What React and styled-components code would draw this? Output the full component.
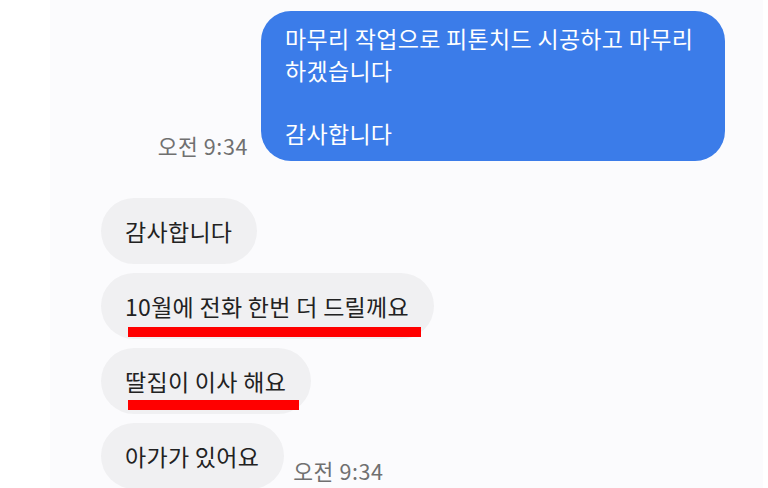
import React from 'react';
import styled, { createGlobalStyle } from 'styled-components';

const GlobalStyle = createGlobalStyle`
    html, body {
        margin: 0;
        padding: 0;
        background: #ffffff;
    }
    body {
        font-family: "Noto Sans CJK KR", "Noto Sans", sans-serif;
    }
`;

const messages = [
    { id: 1, text: '감사합니다' },
    { id: 2, text: '10월에 전화 한번 더 드릴께요', mark: { top: 54, width: 293 } },
    { id: 3, text: '딸집이 이사 해요', mark: { top: 52, width: 171 } },
    { id: 4, text: '아가가 있어요', time: '오전 9:34' },
];

export default function App() {
    return (
        <>
            <GlobalStyle />
            <Page>
                <Panel>
                    <OutRow>
                        <Time>오전 9:34</Time>
                        <BlueBubble>
                            {'마무리 작업으로 피톤치드 시공하고 마무리\n하겠습니다\n\n감사합니다'}
                        </BlueBubble>
                    </OutRow>

                    <InList>
                        {messages.map((m) => (
                            <InRow key={m.id}>
                                <GrayBubble>
                                    {m.text}
                                    {/* red marker drawn over the screenshot */}
                                    {m.mark && <Underline $top={m.mark.top} $width={m.mark.width} />}
                                </GrayBubble>
                                {m.time && <Time $low>{m.time}</Time>}
                            </InRow>
                        ))}
                    </InList>
                </Panel>
            </Page>
        </>
    );
}

const Page = styled.div`
    width: 768px;
    height: 488px;
    overflow: hidden;
    background: #ffffff;
    display: flex;
`;

const Panel = styled.div`
    margin-left: 50px;
    width: 713px;
    height: 488px;
    background: #fbfbfd;
    display: flex;
    flex-direction: column;
    padding-top: 11px;
    box-sizing: border-box;
`;

const OutRow = styled.div`
    display: flex;
    justify-content: flex-end;
    align-items: flex-end;
    gap: 13px;
    padding-right: 38px;
`;

const BlueBubble = styled.div`
    width: 464px;
    box-sizing: border-box;
    padding: 12px 20px 12px 24px;
    background: #3b7ce9;
    color: #ffffff;
    border-radius: 30px;
    font-size: 23px;
    letter-spacing: 0.3px;
    line-height: 31.5px;
    white-space: pre-line;
`;

const Time = styled.div`
    font-size: 21.5px;
    letter-spacing: 0.6px;
    color: #707070;
    line-height: 24px;
    white-space: nowrap;
    margin-bottom: ${(p) => (p.$low ? '6px' : '3px')};
`;

const InList = styled.div`
    display: flex;
    flex-direction: column;
    gap: 9px;
    padding-left: 51px;
    margin-top: 37px;
`;

const InRow = styled.div`
    display: flex;
    align-items: flex-end;
    gap: 9px;
`;

const GrayBubble = styled.div`
    position: relative;
    height: 66px;
    flex-shrink: 0;
    box-sizing: border-box;
    padding: 0 25px 0 24px;
    display: flex;
    align-items: center;
    background: #f0f0f2;
    color: #222222;
    border-radius: 33px;
    font-size: 23px;
    letter-spacing: 0.3px;
    white-space: nowrap;
`;

const Underline = styled.span`
    position: absolute;
    left: 27px;
    top: ${(p) => p.$top}px;
    width: ${(p) => p.$width}px;
    height: 10px;
    background: #ff0000;
`;
